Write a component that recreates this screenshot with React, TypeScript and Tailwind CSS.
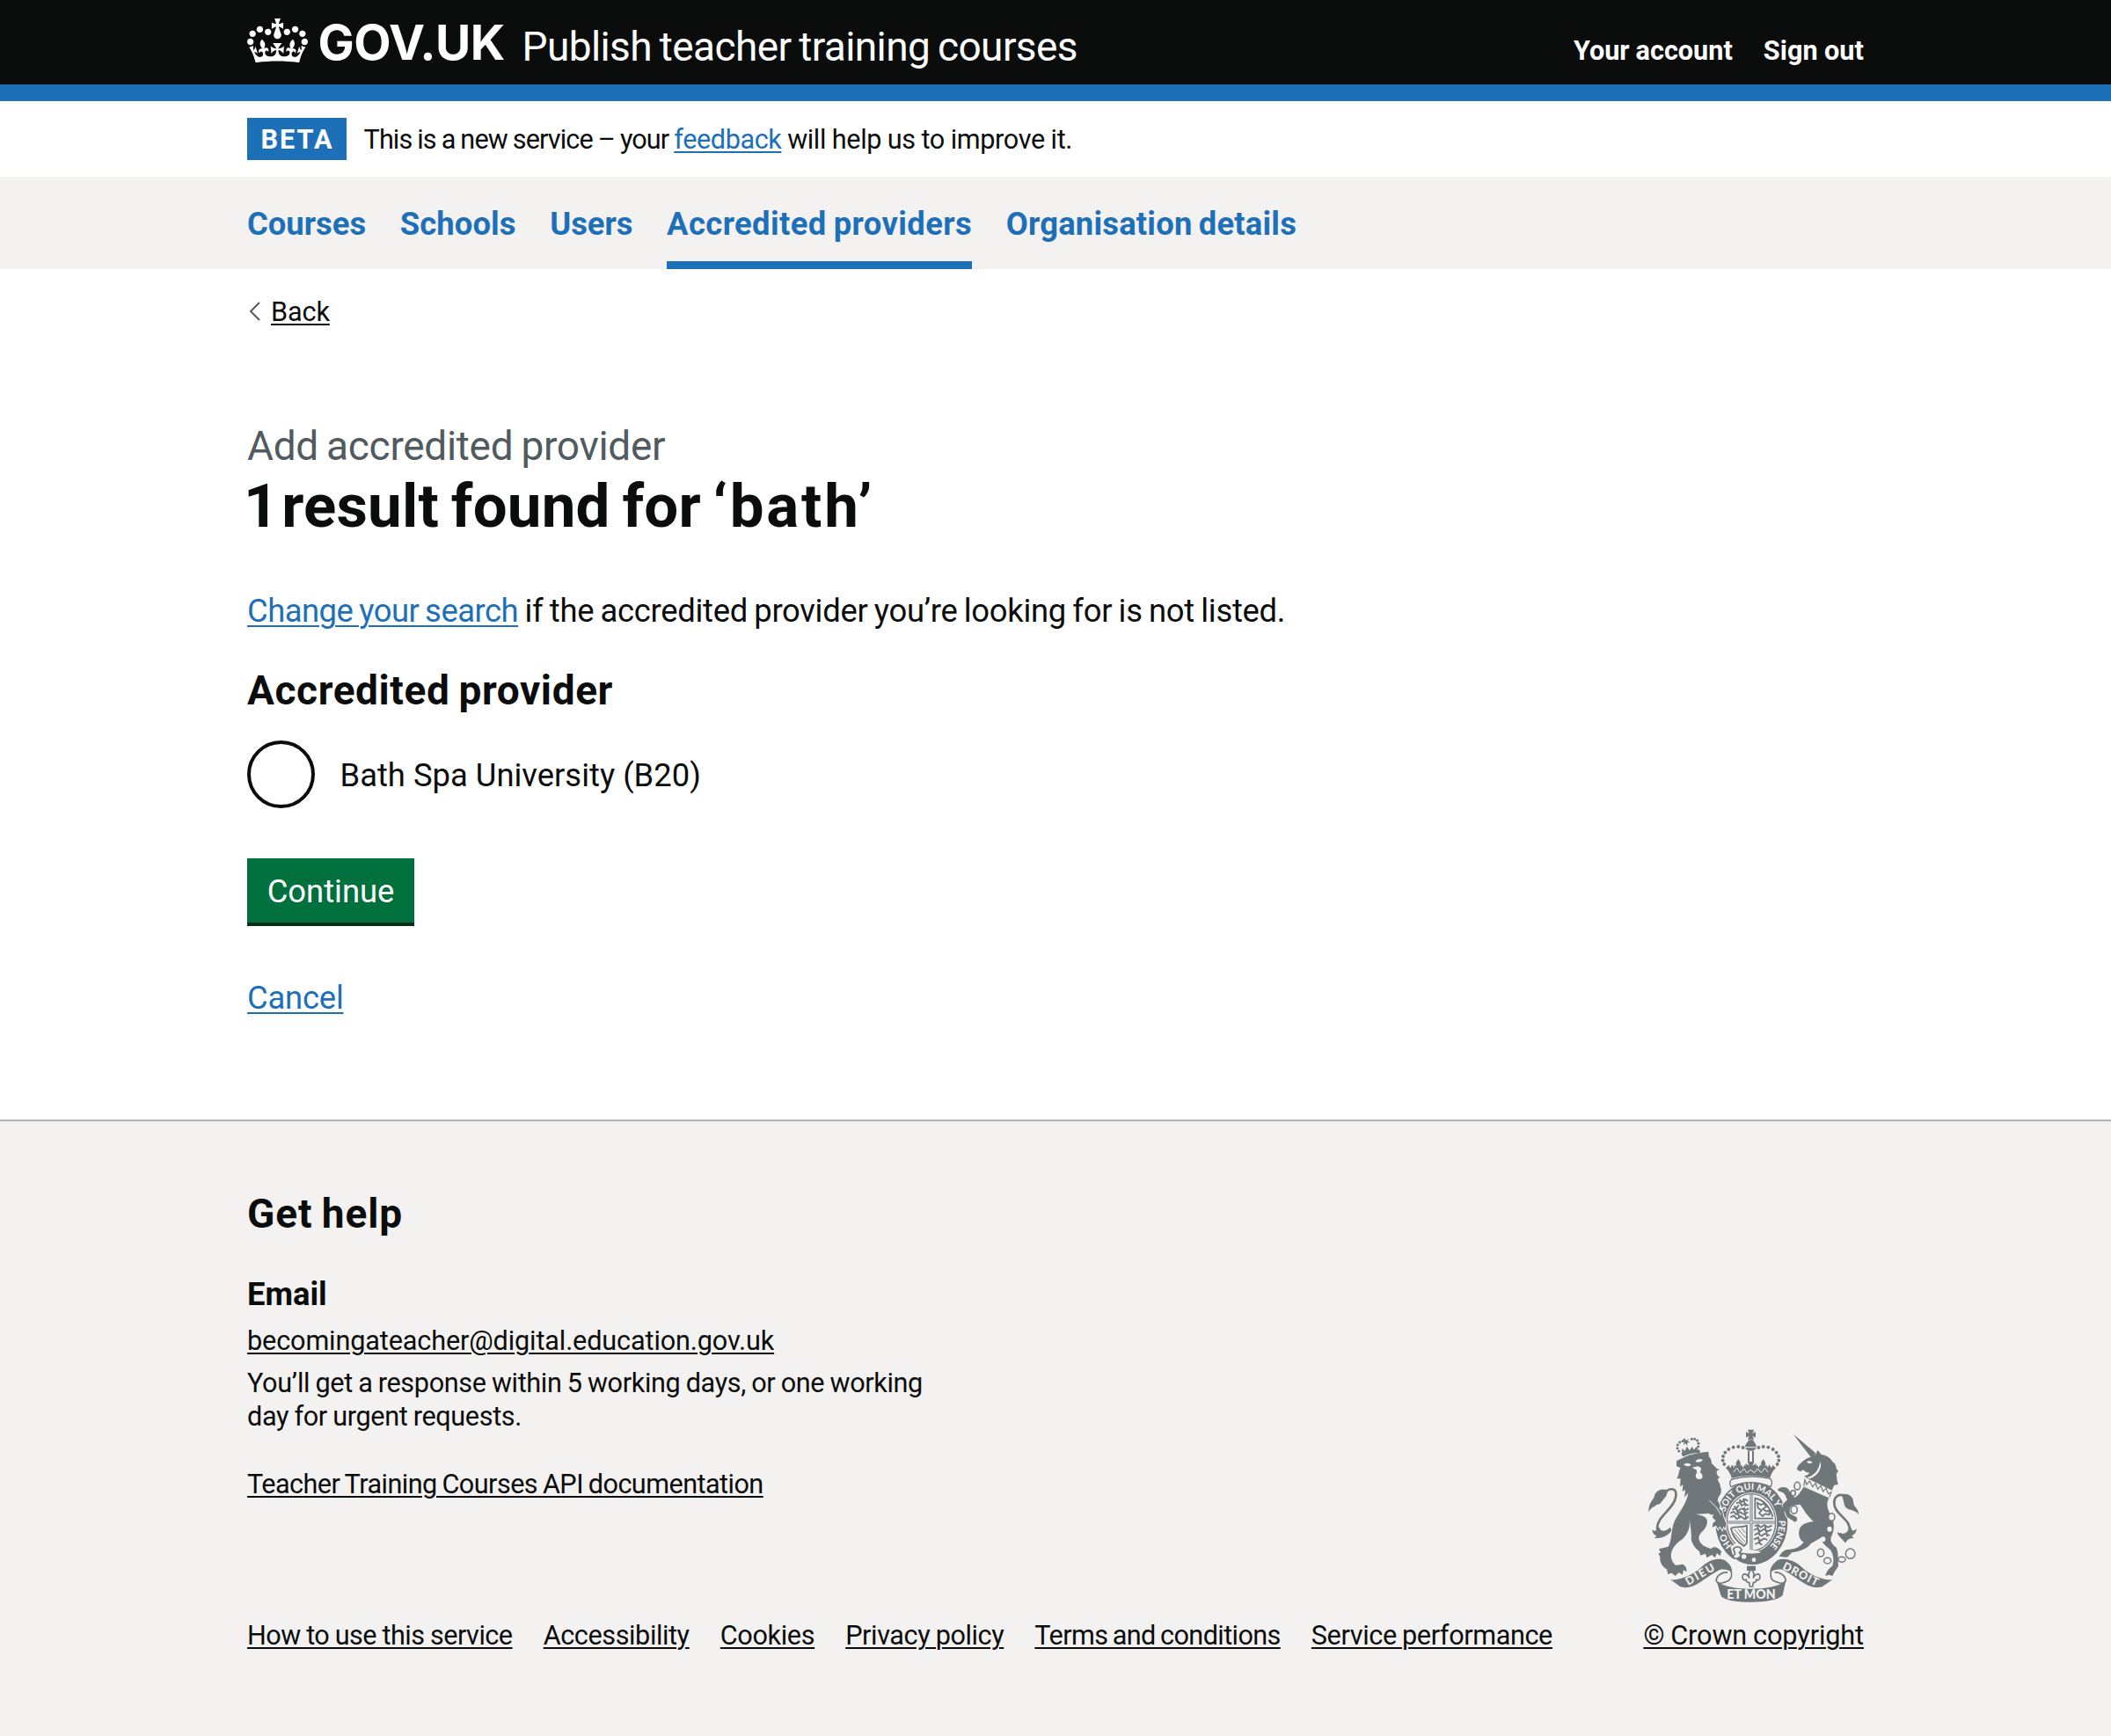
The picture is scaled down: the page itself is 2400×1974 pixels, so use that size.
import type { ReactNode } from 'react';

const INK = '#6f777b';
const PAPER = '#f3f2f1';

function CrownLogo() {
  return (
    <svg viewBox="0 0 132 97" className="mt-[20.5px] h-[50.7px] w-[69px] shrink-0 fill-white" aria-hidden="true">
      <path d="M25 30.2c3.5 1.5 7.7-.2 9.1-3.7 1.5-3.6-.2-7.8-3.9-9.2-3.6-1.4-7.6.3-9.1 3.9-1.4 3.5.3 7.5 3.9 9zM9 39.5c3.6 1.5 7.8-.2 9.2-3.7 1.5-3.6-.2-7.8-3.9-9.1-3.6-1.5-7.6.2-9.1 3.8-1.4 3.5.3 7.5 3.8 9zM4.4 57.2c3.5 1.5 7.7-.2 9.1-3.8 1.5-3.6-.2-7.7-3.9-9.1-3.5-1.5-7.6.3-9.1 3.8-1.4 3.5.3 7.6 3.9 9.1zm38.3-21.4c3.5 1.5 7.7-.2 9.1-3.8 1.5-3.6-.2-7.7-3.9-9.1-3.6-1.5-7.6.3-9.1 3.8-1.3 3.6.4 7.7 3.9 9.1zm64.4-5.6c-3.6 1.5-7.8-.2-9.1-3.7-1.5-3.6.2-7.8 3.8-9.2 3.6-1.4 7.7.3 9.2 3.9 1.3 3.5-.4 7.5-3.9 9zm15.9 9.3c-3.6 1.5-7.7-.2-9.1-3.7-1.5-3.6.2-7.8 3.7-9.1 3.6-1.5 7.7.2 9.2 3.8 1.5 3.5-.3 7.5-3.8 9zm4.7 17.7c-3.6 1.5-7.8-.2-9.2-3.8-1.5-3.6.2-7.7 3.9-9.1 3.6-1.5 7.7.3 9.2 3.8 1.3 3.5-.4 7.6-3.9 9.1zM89.3 35.8c-3.6 1.5-7.8-.2-9.2-3.8-1.4-3.6.2-7.7 3.9-9.1 3.6-1.5 7.7.3 9.2 3.8 1.4 3.6-.3 7.7-3.9 9.1zM69.7 17.7l8.9 4.7V9.3l-8.9 2.8c-.2-.3-.5-.6-.9-.9L72.4 0H59.6l3.5 11.2c-.3.3-.6.5-.9.9l-8.8-2.8v13.1l8.8-4.7c.3.3.6.7.9.9l-5 15.4v.1c-.2.8-.4 1.6-.4 2.4 0 4.1 3.1 7.5 7 8.1h.2c.3 0 .7.1 1 .1.4 0 .7 0 1-.1h.2c4-.6 7.1-4.1 7.1-8.1 0-.8-.1-1.7-.4-2.4V34l-5.1-15.4c.4-.2.7-.6 1-.9zM66 92.8c16.9 0 32.8 1.1 47.1 3.2 4-16.9 8.9-26.7 14-33.5l-9.6-3.4c1 4.9 1.1 7.2 0 10.2-1.5-1.4-3-4.3-4.2-8.7L108.6 76c2.8-2 5-3.2 7.5-3.3-4.4 9.4-10 11.9-13.6 11.2-4.3-.8-6.3-4.6-5.6-7.9 1-4.7 5.7-5.9 8-.5 4.3-8.7-3-11.4-7.6-8.8 7.1-7.2 7.9-13.5 2.1-21.1-8 6.1-8.1 12.3-4.5 20.8-4.7-5.4-12.1-2.5-9.5 6.2 3.4-5.2 7.9-2 7.2 3.1-.6 4.3-6.4 7.8-13.5 7.2-10.3-.9-10.9-8-11.2-13.8 2.5-.5 7.1 1.8 11 7.3L80.2 60c-4.1 4.4-8 5.3-12.3 5.4 1.4-4.4 8-11.6 8-11.6H55.5s6.4 7.2 7.9 11.6c-4.2-.1-8-1-12.3-5.4l1.4 16.4c3.9-5.5 8.5-7.7 10.9-7.3-.3 5.8-.9 12.8-11.1 13.8-7.2.6-12.9-2.9-13.5-7.2-.7-5 3.8-8.3 7.1-3.1 2.7-8.7-4.6-11.6-9.4-6.2 3.7-8.5 3.6-14.7-4.6-20.8-5.8 7.6-5 13.9 2.2 21.1-4.7-2.6-11.9.1-7.7 8.8 2.3-5.5 7.1-4.2 8.1.5.7 3.3-1.3 7.1-5.7 7.9-3.5.7-9-1.8-13.5-11.2 2.5.1 4.7 1.3 7.5 3.3l-4.7-15.4c-1.2 4.4-2.7 7.2-4.3 8.7-1.1-3-.9-5.3 0-10.2l-9.5 3.4c5 6.9 9.9 16.7 14 33.5 14.8-2.1 30.8-3.2 47.7-3.2z" />
    </svg>
  );
}

const smallCrownDots = [[176, 148], [171, 138], [172, 127], [179, 118], [189, 114], [220, 107], [230, 107], [239, 112], [243, 122], [242, 133]];
const archDots = [[395, 136], [379, 133], [362, 135], [346, 142], [334, 153], [327, 166], [326, 180], [331, 193], [448, 136], [464, 133], [481, 135], [497, 142], [509, 153], [516, 166], [517, 180], [512, 193]];
const chainRings = [[580, 267, 10, 13], [566, 291, 8, 9], [569, 348, 11, 13], [697, 373, 11, 13], [660, 495, 11, 13], [683, 522, 12, 10], [732, 518, 12, 9], [761, 498, 16, 17]];

/* Royal coat of arms: lion and unicorn supporting the garter and shield. */
function RoyalArms() {
  return (
    <svg viewBox="60 70 740 600" className="mb-[17px] ml-[1.5px] block h-[200px] w-[246.67px]" fill={INK} aria-hidden="true">
      {/* crown above the garter */}
      <path d="M411 75H433L427 88L438 82V102L427 96L433 108H411L416 96L405 102V82L416 88Z" />
      <path d="M415 110H429L440 128V134H403V128ZM403 137H440Q436 148 421 147Q407 148 403 137Z" />
      {archDots.map(([x, y]) => <circle key={`${x}-${y}`} cx={x} cy={y} r="5.8" />)}
      <path d="M414 148V184M429 148V184" stroke={INK} strokeWidth="6" />
      <path d="M336 206L346 196L352 206L358 194L366 208C362 198 368 194 373 198C368 190 374 182 379 176C384 182 390 190 385 198C392 194 396 200 392 208L402 194L406 210L416 204L404 212V190L416 198L410 184H433L427 198L439 190V212L428 204L437 210L441 194L451 208C447 200 451 194 458 198C453 190 459 182 464 176C469 182 475 190 470 198C475 194 481 198 477 208L485 194L491 206L497 196L507 206C496 216 490 228 487 240Q421 226 356 240C353 228 347 216 336 206Z" />
      <path d="M362 220L374 206L386 222L398 208L408 222L421 212L434 222L445 208L457 222L469 206L480 220" fill="none" stroke={PAPER} strokeWidth="3" />

      {/* garter */}
      <ellipse cx="424" cy="393" rx="123" ry="142" />
      <path d="M357 244Q421 228 487 242Q499 252 489 270Q421 240 354 270Q345 256 357 244Z" fill={PAPER} stroke={INK} strokeWidth="4" />
      <ellipse cx="423" cy="391" rx="88" ry="102" fill={PAPER} />
      <ellipse cx="423" cy="391" rx="83" ry="97" fill="none" stroke={INK} strokeWidth="4" />
      <path id="garter-motto" d="M423 502A94 111 0 0 1 423 280A94 111 0 0 1 423 502" fill="none" />
      {/* quartered shield */}
      <path d="M423 296V486M341 391H505" stroke={INK} strokeWidth="9" />
      <path d="M423 296V486M341 391H505" stroke={PAPER} strokeWidth="3" />
      <g fill="none" stroke={INK} strokeWidth="5.5" strokeLinejoin="round">
        <path d="M382 314L392 322L400 312L412 318M372 326L384 322L390 334L402 328L414 334M364 336L374 342L380 332M358 348L368 344L378 352L390 344L400 350L414 344M352 360L362 354L372 364L384 356L398 364L412 356M352 374L364 368L374 380L386 370L400 380L414 372M396 310L404 336M370 340L384 378M398 340L406 382" />
        <path d="M436 306V378H498M438 310C462 314 484 334 496 372M444 324L456 332L466 326L474 338L462 346L476 354L486 350L484 366L470 362L462 370L450 360L458 350L446 342Z" />
        <path d="M434 404L446 400L456 408L468 400L480 408L494 402M432 418L444 412L454 422L466 414L478 422L492 416M434 434L446 428L458 438L468 430L486 436M432 450L444 444L454 454L468 446L478 452M436 466L448 460L460 468M444 402L452 436M470 404L478 440M446 440L454 466" />
        <path d="M354 412C368 402 386 412 408 402V462L398 472C378 460 360 440 354 412Z" />
        <path d="M366 416L402 458M378 414L404 444M390 412L404 428M364 428L396 464" strokeWidth="3" />
      </g>
      {/* buckle and strap */}
      <path d="M352 474L372 462L398 480L456 492L448 500L412 548L366 524Z" fill={PAPER} />
      <path d="M384 494C410 498 440 502 486 488L500 476L508 494C486 524 448 538 418 535C398 532 380 526 364 510Z" />
      <path d="M362 482C372 470 388 474 390 486L382 494L388 502C386 514 368 520 360 508L368 498Z" fill={PAPER} stroke={INK} strokeWidth="5" />
      <circle cx="398" cy="508" r="8" fill={PAPER} />
      <circle cx="432" cy="519" r="7" fill={PAPER} />

      {/* lion tail */}
      <path d="M126 290C150 270 170 275 166 303C160 345 104 368 102 410C102 432 128 432 146 418" fill="none" stroke={INK} strokeWidth="8" />
      <path d="M139 282C118 273 98 284 93 300C89 318 72 322 73 356C82 340 90 340 99 332C116 330 118 318 128 308C136 300 136 290 139 282Z" />
      <path d="M104 408C102 420 94 424 85 416C88 430 92 436 100 437C96 443 96 443 92 444C112 448 138 440 152 418L146 408C130 426 112 422 110 408Z" />
      {/* lion */}
      <path
        stroke={PAPER}
        strokeWidth="6"
        paintOrder="stroke"
        d="M168 182L188 172C206 160 240 154 277 150L279 168C286 172 288 184 288 190L306 208L315 211L305 216C304 226 308 234 317 238L309 242C308 254 322 262 316 268C324 276 318 284 320 292C314 300 310 306 308 316C316 330 324 350 328 372L338 396L334 413L328 405L324 417L316 404L310 414L303 402L290 408L292 394L302 386L290 374L296 364C284 370 276 356 272 362C252 362 240 364 232 362C250 370 278 368 272 396C268 416 250 424 246 436C240 450 250 464 262 472L286 482C296 470 310 478 321 490L317 506L306 496L300 512L288 502L272 512L266 498L250 504L246 490C230 480 220 462 218 446C220 430 216 410 212 376C216 412 206 432 186 450C162 466 146 488 150 512C152 524 158 532 166 538L188 534C200 538 204 548 202 560L192 554L188 570L176 562L164 574L152 564L138 568L136 552C118 542 110 526 112 508L106 498L114 494L108 482L140 474C152 452 150 420 158 396C170 362 204 330 208 290L196 306L198 280L188 286L190 262L180 270L182 242L168 242C178 232 174 216 182 206L168 200Z"
      />
      <path d="M280 316L304 340L320 366" fill="none" stroke={PAPER} strokeWidth="3" />
      <path d="M192 194C202 186 214 188 218 196C208 202 198 200 192 194ZM232 184C238 174 250 172 258 178C252 186 242 188 232 184ZM222 206C234 196 254 200 252 210L248 220C262 230 258 245 246 244C232 243 230 230 238 222L236 212Z" fill={PAPER} />
      {/* lion's crown */}
      <path d="M184 156C204 144 226 140 248 144L248 154C228 154 206 158 190 167Z" />
      <path d="M186 154L188 138L196 148L204 132L212 146L222 132L226 144L236 134L242 143ZM196 104L201 112L210 106L206 114L214 118L204 120L206 130L198 122L192 128L194 118L190 110Z" />
      {smallCrownDots.map(([x, y]) => <circle key={`${x}-${y}`} cx={x} cy={y} r="4.5" />)}

      {/* unicorn tail */}
      <path d="M748 306C722 286 704 306 706 328C708 366 762 378 759 420C758 436 742 440 724 430" fill="none" stroke={INK} strokeWidth="8" />
      <path d="M732 295C752 292 772 300 772 326C774 342 790 344 789 364C780 352 772 352 762 348C744 346 740 334 738 320Z" />
      <path d="M764 410C766 424 776 420 783 412C780 428 774 434 766 436L772 446C756 444 750 452 744 462C736 448 718 440 716 424C734 436 752 430 756 410Z" />
      {/* unicorn */}
      <path d="M566 90L642 154L640 164L650 145L662 160C680 162 694 172 700 184C710 190 714 200 713 208L720 216L713 226C716 240 714 250 720 262L706 264L698 282L612 240L604 232C612 232 618 228 622 222C610 222 604 216 600 212L590 218L578 210L584 196C592 190 606 172 626 168Z" />
      <path d="M612 184C620 180 626 182 632 186C626 192 618 192 612 184ZM658 184C668 206 646 238 620 242L612 238C636 234 654 214 658 184Z" fill={PAPER} />
      <path d="M606 246L612 262L622 250L632 270L642 258L650 278L660 266L668 286L678 274L686 294L696 288L688 310L602 268Z" fill={PAPER} stroke={INK} strokeWidth="3.5" />
      <path
        stroke={PAPER}
        strokeWidth="6"
        paintOrder="stroke"
        d="M602 270L688 308C676 330 684 350 698 374C708 398 706 420 696 440C690 456 700 466 712 476C722 492 718 520 720 540L706 562L700 574L688 570L676 574C678 560 688 548 700 540C706 520 704 500 692 484C676 470 662 460 660 444L626 464C616 480 590 490 562 494L546 510L518 508C526 494 536 482 550 484C574 484 592 474 602 458C588 452 584 436 586 420C590 400 606 392 636 388C618 374 600 346 590 330L562 334C554 338 552 350 556 362L578 374L580 384L572 390L544 372C540 356 532 346 530 330L546 314C540 300 536 290 528 288L512 282C518 272 530 268 546 274C556 286 560 300 572 306C584 300 594 282 602 270Z"
      />
      <path d="M524 342L540 330L538 352L526 366L530 378L518 370Z" />
      {chainRings.map(([x, y, rx, ry]) => (
        <ellipse key={`${x}-${y}`} cx={x} cy={y} rx={rx} ry={ry} fill={PAPER} stroke={INK} strokeWidth="4.5" />
      ))}
      <ellipse cx="690" cy="414" rx="8" ry="9" fill={PAPER} />
      <ellipse cx="668" cy="449" rx="8" ry="9" fill={PAPER} />

      {/* garter motto */}
      <g fill={PAPER} fontFamily="Lato, sans-serif" fontWeight="900" fontSize="31">
        <text><textPath href="#garter-motto" startOffset="11.5%">HO</textPath></text>
        <text><textPath href="#garter-motto" startOffset="30.5%">SOIT QUI MAL Y</textPath></text>
        <text><textPath href="#garter-motto" startOffset="74%">PENSE</textPath></text>
      </g>

      {/* fleur-de-lis */}
      <path d="M408 540H438V556H408Z" />
      <path d="M423 552C432 560 434 570 430 580C440 562 454 566 453 578C452 588 444 590 440 586C442 594 434 598 430 596L428 610H418L416 596C412 598 404 594 406 586C402 590 394 588 393 578C392 566 406 562 416 580C412 570 414 560 423 552Z" fill={PAPER} stroke={INK} strokeWidth="5" strokeLinejoin="round" />
      {/* motto ribbon */}
      <path d="M343 562C326 560 302 572 304 592C312 604 334 596 346 590C358 580 358 566 352 552M502 562C518 560 542 572 540 592C532 604 510 596 498 590C486 580 488 566 492 552" fill={PAPER} stroke={INK} strokeWidth="5" />
      <path d="M148 587C190 590 236 562 262 536C284 518 322 508 340 526C352 536 358 548 357 560C340 552 322 546 306 558C280 572 252 596 226 608C206 616 190 614 180 610Z" />
      <path d="M700 587C656 590 612 562 586 536C562 518 522 508 506 526C494 536 488 548 487 560C504 552 524 546 540 558C566 572 594 596 620 608C640 616 658 614 666 610Z" />
      <path d="M304 588C314 606 366 618 423 618C480 618 532 606 542 586L530 640C516 656 472 663 423 663C376 663 332 658 320 642Z" />
      <g fill={PAPER} fontFamily="Lato, sans-serif" fontWeight="900">
        <text x="340" y="653" fontSize="43" textLength="166" lengthAdjust="spacingAndGlyphs">ET MON</text>
        <text transform="translate(208 607) rotate(-30)" fontSize="38" textLength="108">DIEU</text>
        <text transform="translate(527 549) rotate(27)" fontSize="38" textLength="132">DROIT</text>
      </g>
    </svg>
  );
}

function TextLink({ className, children }: { className: string; children: ReactNode }) {
  return (
    <a href="#" className={`underline decoration-2 ${className}`}>
      {children}
    </a>
  );
}

const navItems = [
  { label: 'Courses', cls: '' },
  { label: 'Schools', cls: 'tracking-[0.1px]' },
  { label: 'Users', cls: '' },
  { label: 'Accredited providers', cls: 'tracking-[0.4px] [word-spacing:-1.4px]', current: true },
  { label: 'Organisation details', cls: 'tracking-[0.2px] [word-spacing:-2px]' },
];

const metaLinks = [
  { label: 'How to use this service', cls: 'tracking-[-0.5px] [word-spacing:-0.7px]' },
  { label: 'Accessibility', cls: 'tracking-[-0.4px]' },
  { label: 'Cookies', cls: 'tracking-[-0.35px]' },
  { label: 'Privacy policy', cls: 'tracking-[-0.4px] [word-spacing:-0.8px]' },
  { label: 'Terms and conditions', cls: 'tracking-[-0.6px] [word-spacing:-1.6px]' },
  { label: 'Service performance', cls: 'tracking-[-0.37px] [word-spacing:-1px]' },
];

export default function App() {
  return (
    <div className="flex min-h-[1974px] flex-col bg-white font-[Roboto,sans-serif] text-[#0b0c0c]">
      <header className="h-[115px] border-b-[19px] border-[#1d70b8] bg-[#0b0c0c] text-white">
        <div className="mx-auto flex w-[1838px] items-start">
          <CrownLogo />
          <span className="mt-[25px] ml-[11.5px] w-[232px] font-[Inter,sans-serif] text-[55px] leading-[46px] font-bold tracking-[-0.5px]">
            GOV.UK
          </span>
          <span className="mt-[30px] text-[46px] leading-[46px] tracking-[-0.6px] [word-spacing:-2px]">
            Publish teacher training courses
          </span>
          <nav className="mt-[42.5px] ml-auto flex gap-[35px] text-[30.6px] leading-[30px] font-bold">
            <a href="#" className="[word-spacing:-0.5px]">Your account</a>
            <a href="#" className="tracking-[0.1px] [word-spacing:-0.5px]">Sign out</a>
          </nav>
        </div>
      </header>

      <div className="mx-auto flex h-[86px] w-[1838px] items-start pt-[19px] text-[30.6px] leading-[49px]">
        <strong className="h-12 w-[113px] bg-[#1d70b8] pl-[15.5px] font-bold tracking-[2px] text-white">BETA</strong>
        <p className="ml-[19.5px] whitespace-pre">
          <span className="tracking-[-0.87px] [word-spacing:-0.8px]">This is a new service – your </span>
          <TextLink className="tracking-[-0.4px] text-[#1d70b8] underline-offset-[3px]">feedback</TextLink>
          <span className="tracking-[-0.35px] [word-spacing:-0.5px]"> will help us to improve it.</span>
        </p>
      </div>

      <nav className="h-[105px] bg-[#f3f2f1]">
        <ul className="mx-auto flex h-full w-[1838px] gap-[38.6px] text-[36.4px] leading-10 font-bold text-[#1d70b8]">
          {navItems.map((item) => (
            <li
              key={item.label}
              className={`border-b-[9px] pt-[34px] whitespace-nowrap ${item.current ? 'border-[#1d70b8]' : 'border-transparent'} ${item.cls}`}
            >
              <a href="#">{item.label}</a>
            </li>
          ))}
        </ul>
      </nav>

      <main className="mx-auto flex w-[1838px] grow flex-col items-start">
        <div className="mt-[30px] flex h-[38px] items-center text-[30.6px] leading-[38px]">
          <svg viewBox="0 0 13 22" className="mt-[-2px] ml-[2px] h-[22px] w-[13px]" fill="none" stroke="#505a5f" strokeWidth="2" aria-hidden="true">
            <path d="M12 1L2 11L12 21" />
          </svg>
          <TextLink className="ml-[12px] tracking-[-0.1px] underline-offset-[3px]">Back</TextLink>
        </div>

        <span className="mt-[105px] text-[46px] leading-[56px] tracking-[-0.3px] text-[#505a5f] [word-spacing:-2px]">
          Add accredited provider
        </span>
        <h1 className="mt-[6px] text-[69px] leading-[69px] font-bold whitespace-pre [word-spacing:-3.5px]">
          <span className="-ml-[4px] [word-spacing:-13.6px]">1 </span>
          <span className="tracking-[0.2px]">result found for </span>
          <span className="tracking-[2.8px]">‘bath’</span>
        </h1>

        <p className="mt-[61px] text-[36.4px] leading-[48px] whitespace-pre">
          <TextLink className="tracking-[-0.5px] text-[#1d70b8] underline-offset-[4px] [word-spacing:-1.7px]">Change your search</TextLink>
          <span className="tracking-[-0.3px] [word-spacing:-1.3px]"> if the accredited provider you’re looking for is not listed.</span>
        </p>

        <h2 className="mt-[37px] text-[46px] leading-[58px] font-bold tracking-[0.6px] [word-spacing:-2px]">Accredited provider</h2>
        <label className="mt-[28px] flex h-[77px] items-center text-[36.4px] leading-[48px]">
          <span className="h-[77px] w-[77px] rounded-full border-4 border-[#0b0c0c]" />
          <span className="ml-[28.5px] pt-[3px]">Bath Spa University (B20)</span>
        </label>

        <button className="mt-[57px] h-[77px] w-[190px] border-b-4 border-[#002d18] bg-[#00703c] pt-[3px] text-[36.4px] leading-[70px] text-white">
          Continue
        </button>
        <TextLink className="mt-[58px] text-[36.4px] leading-[48px] tracking-[-0.2px] text-[#1d70b8] underline-offset-[4px]">Cancel</TextLink>
      </main>

      <footer className="h-[701px] border-t-2 border-[#b1b4b6] bg-[#f3f2f1]">
        <div className="mx-auto flex w-[1838px] items-end justify-between text-[30.6px] leading-[38.3px]">
          <div className="flex flex-col items-start">
            <h2 className="mt-[76px] text-[46px] leading-[58px] font-bold tracking-[0.9px] [word-spacing:-2px]">Get help</h2>
            <h3 className="mt-[38.5px] text-[36.4px] leading-[48px] font-bold">Email</h3>
            <TextLink className="mt-[10.5px] tracking-[-0.12px] underline-offset-[3px]">becomingateacher@digital.education.gov.uk</TextLink>
            <p className="mt-[9.5px] tracking-[-0.35px] [word-spacing:-0.9px]">
              You’ll get a response within 5 working days, or one working
              <br />
              day for urgent requests.
            </p>
            <TextLink className="mt-[38.3px] tracking-[-0.54px] underline-offset-[3px] [word-spacing:-1.2px]">
              Teacher Training Courses API documentation
            </TextLink>
            <ul className="mt-[134.5px] flex gap-[35.1px] whitespace-nowrap">
              {metaLinks.map((link) => (
                <li key={link.label}>
                  <TextLink className={`underline-offset-[3px] ${link.cls}`}>{link.label}</TextLink>
                </li>
              ))}
            </ul>
          </div>
          <div>
            <RoyalArms />
            <TextLink className="tracking-[-0.1px] underline-offset-[3px] [word-spacing:-0.5px]">© Crown copyright</TextLink>
          </div>
        </div>
      </footer>
    </div>
  );
}
